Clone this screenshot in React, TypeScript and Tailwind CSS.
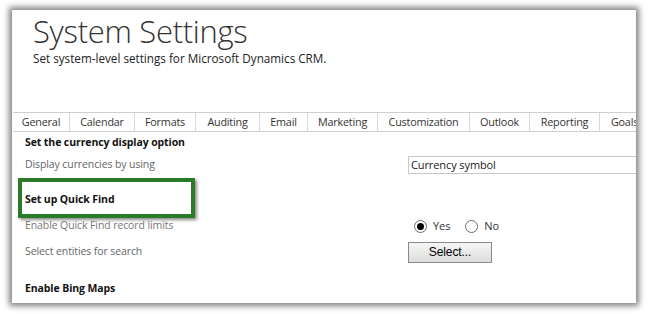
const tabs: { label: string; w: number }[] = [
  { label: 'General', w: 57 },
  { label: 'Calendar', w: 65 },
  { label: 'Formats', w: 61 },
  { label: 'Auditing', w: 64 },
  { label: 'Email', w: 48 },
  { label: 'Marketing', w: 70 },
  { label: 'Customization', w: 92 },
  { label: 'Outlook', w: 60 },
  { label: 'Reporting', w: 70 },
  { label: 'Goals', w: 50 },
];

function Radio({ checked, label }: { checked?: boolean; label: string }) {
  return (
    <label className="flex items-center gap-[6px]">
      <span className="w-[13px] h-[13px] rounded-full border border-[#6b6b6b] bg-white flex items-center justify-center">
        {checked && <span className="w-[7px] h-[7px] rounded-full bg-black" />}
      </span>
      <span className="text-[#333]">{label}</span>
    </label>
  );
}

export default function App() {
  return (
    <div className="w-[650px] h-[314px] bg-white pt-[10px] pl-[12px] font-['Open_Sans',sans-serif] overflow-hidden">
      <div className="relative w-[624px] h-[293px] bg-white overflow-hidden shadow-[0_0_6px_3px_rgba(90,90,90,0.75)]">
        {/* header */}
        <div className="pl-[21px] pt-[1px]">
          <h1 className="text-[31px] font-light leading-[40px] text-[#333] tracking-[-0.3px]">System Settings</h1>
          <p className="text-[11.7px] leading-[16px] text-[#222] -mt-[1px]">
            Set system-level settings for Microsoft Dynamics CRM.
          </p>
        </div>

        {/* tabs */}
        <div className="mt-[46px] ml-[1px] flex h-[20px] border-t border-b border-[#cfcfcf] w-[700px]">
          {tabs.map((t) => (
            <div
              key={t.label}
              style={{ width: t.w }}
              className="shrink-0 border-r border-[#d8d8d8] flex items-center justify-center text-[10.8px] tracking-[-0.2px] text-[#333]"
            >
              {t.label}
            </div>
          ))}
        </div>

        {/* settings */}
        <div className="pl-[13px] text-[10.5px] tracking-[-0.1px]">
          <div className="h-[22px] flex items-center font-bold text-[#111]">Set the currency display option</div>
          <div className="h-[22px] flex items-center">
            <span className="w-[383px] text-[#666]">Display currencies by using</span>
            <div className="h-[18px] flex-1 border border-[#c8c8c8] flex items-center pl-[2px] text-[11px] text-[#222] -mr-[4px]">
              Currency symbol
            </div>
          </div>
          <div className="mt-[13px] h-[22px] flex items-center font-bold text-[#111]">Set up Quick Find</div>
          <div className="mt-[4px] h-[22px] flex items-center">
            <span className="w-[389px] text-[#777]">Enable Quick Find record limits</span>
            <div className="flex items-center gap-[15px] text-[11px]">
              <Radio checked label="Yes" />
              <Radio label="No" />
            </div>
          </div>
          <div className="mt-[4px] h-[22px] flex items-center">
            <span className="w-[383px] text-[#666]">Select entities for search</span>
            <button className="h-[21px] w-[84px] border border-[#8a8a8a] bg-gradient-to-b from-[#f6f6f6] to-[#dcdcdc] text-[12px] text-black font-['Liberation_Sans',sans-serif]">
              Select...
            </button>
          </div>
          <div className="mt-[15px] h-[22px] flex items-center font-bold text-[#111]">Enable Bing Maps</div>
        </div>

        {/* annotation highlight */}
        <div className="absolute left-[6px] top-[168px] w-[177px] h-[40px] border-[4px] border-[#2a7a2a] shadow-[2px_2px_3px_rgba(0,0,0,0.45)]" />
      </div>
    </div>
  );
}
